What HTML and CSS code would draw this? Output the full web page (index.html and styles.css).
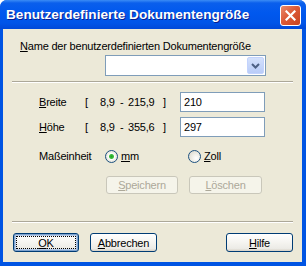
FILE: index.html
```html
<!DOCTYPE html>
<html lang="de">
<head>
  <meta charset="UTF-8" />
  <title>Benutzerdefinierte Dokumentengröße</title>
  <link rel="stylesheet" href="styles.css">
</head>
<body>
  <div class="window">
    <div class="titlebar">
      <span class="title">Benutzerdefinierte Dokumentengröße</span>
      <div class="close-btn">
        <svg width="11" height="11" viewBox="0 0 11 11">
          <path d="M1.5 1.5 L9.5 9.5 M9.5 1.5 L1.5 9.5" stroke="#fff" stroke-width="2.2" stroke-linecap="square" fill="none"/>
        </svg>
      </div>
    </div>

    <div class="client">
      <div class="name-label"><u>N</u>ame der benutzerdefinierten Dokumentengröße</div>
      <div class="combo">
        <div class="combo-arrow">
          <svg width="9" height="6" viewBox="0 0 9 6">
            <path d="M1 1 L4.5 4.5 L8 1" stroke="#4d6185" stroke-width="2" fill="none"/>
          </svg>
        </div>
      </div>

      <div class="sep"></div>

      <div class="size-rows">
        <div class="row">
          <span class="lbl"><u>B</u>reite</span>
          <span class="br">[</span><span class="lo">8,9</span><span class="dash">-</span><span class="hi">215,9</span><span class="br-end">]</span>
          <div class="field">210</div>
        </div>
        <div class="row">
          <span class="lbl"><u>H</u>öhe</span>
          <span class="br">[</span><span class="lo">8,9</span><span class="dash">-</span><span class="hi">355,6</span><span class="br-end">]</span>
          <div class="field">297</div>
        </div>
        <div class="row unit-row">
          <span class="lbl unit-lbl">Maßeinheit</span>
          <span class="radio first"><span class="dot checked"></span><span><u>m</u>m</span></span>
          <span class="radio"><span class="dot"></span><span><u>Z</u>oll</span></span>
        </div>
      </div>

      <div class="mid-buttons">
        <div class="btn disabled save"><u>S</u>peichern</div>
        <div class="btn disabled del"><u>L</u>öschen</div>
      </div>

      <div class="sep sep-bottom"></div>

      <div class="footer">
        <div class="btn default ok"><u>O</u>K</div>
        <div class="btn cancel"><u>A</u>bbrechen</div>
        <div class="btn help"><u>H</u>ilfe</div>
      </div>
    </div>
  </div>
</body>
</html>
```

FILE: styles.css
```css
* {
  margin: 0;
  padding: 0;
  box-sizing: border-box;
}

body {
  background-color: #fff;
  font-family: 'Liberation Sans', Arial, sans-serif;
  font-size: 11px;
  line-height: 13px;
  letter-spacing: -0.2px;
  color: #000;
}

u {
  text-decoration: underline;
  text-underline-offset: 1px;
}

.window {
  width: 306px;
  height: 266px;
  display: flex;
  flex-direction: column;
  background-color: #0054e3;
  border-radius: 7px 7px 0 0;
  overflow: hidden;
}

/* Titelleiste */
.titlebar {
  height: 29px;
  flex-shrink: 0;
  display: flex;
  align-items: flex-start;
  justify-content: space-between;
  padding: 5px 5px 0 6px;
  background: linear-gradient(to bottom, #3b8cf5 0, #0a5fec 3px, #0058ee 45%, #0054e8 80%, #0048d8 100%);
}

.title {
  color: #fff;
  font-weight: bold;
  font-size: 13.6px;
  line-height: 16px;
  padding-top: 2px;
  letter-spacing: 0;
  text-shadow: 1px 1px 0 #0a1f8f;
}

.close-btn {
  width: 21px;
  height: 21px;
  border: 1px solid #fff;
  border-radius: 3px;
  background: linear-gradient(135deg, #e98a6c 0%, #dc5a37 45%, #c9431f 100%);
  display: flex;
  align-items: center;
  justify-content: center;
}

/* Inhalt */
.client {
  flex: 1;
  background-color: #ece9d8;
  margin: 0 4px 4px 3px;
  display: flex;
  flex-direction: column;
}

.name-label {
  margin-top: 11px;
  padding-left: 17px;
}

.combo {
  margin: 2px 0 0 102px;
  width: 161px;
  height: 21px;
  border: 1px solid #7f9db9;
  background-color: #fff;
  display: flex;
  justify-content: flex-end;
  padding: 1px;
}

.combo-arrow {
  width: 17px;
  height: 17px;
  border-radius: 2px;
  background: linear-gradient(to bottom, #d4e1fc, #b9ccf8);
  border: 1px solid #c3d3fd;
  display: flex;
  align-items: center;
  justify-content: center;
}

.sep {
  margin: 5px 0 0 9px;
  width: 281px;
  height: 2px;
  border-top: 1px solid #aca899;
  border-bottom: 1px solid #fff;
}

.size-rows {
  margin-top: 9px;
  display: flex;
  flex-direction: column;
  gap: 5px;
}

.row {
  height: 20px;
  display: flex;
  align-items: center;
  padding-left: 36px;
}

.lbl {
  width: 46px;
}

.br {
  width: 15px;
}

.lo {
  width: 20px;
}

.dash {
  width: 8px;
}

.hi {
  width: 35px;
}

.br-end {
  width: 17px;
}

.field {
  width: 85px;
  height: 20px;
  border: 1px solid #7f9db9;
  background-color: #fff;
  padding: 3px 0 0 3px;
}

.unit-row {
  margin-top: 4px;
}

.unit-lbl {
  width: 66px;
}

.radio {
  display: flex;
  align-items: center;
  gap: 3px;
}

.radio.first {
  width: 83px;
}

.dot {
  width: 13px;
  height: 13px;
  border-radius: 50%;
  border: 1px solid #1c5180;
  background: radial-gradient(circle at 65% 65%, #fff 0, #f0efe8 40%, #d6d3c6 100%);
}

.dot.checked {
  background: radial-gradient(circle, #21a121 0, #3fbf3f 2px, #fff 3px, #f0efe8 55%, #d6d3c6 100%);
}

/* Buttons */
.btn {
  display: flex;
  align-items: center;
  justify-content: center;
  border: 1px solid #003c74;
  border-radius: 3px;
  background: linear-gradient(to bottom, #ffffff 0%, #f5f4f0 50%, #ecebe6 85%, #d6d0c5 100%);
  padding-top: 1px;
}

.btn.disabled {
  border-color: #c9c7ba;
  background: #f5f4ea;
  color: #aca899;
}

.mid-buttons {
  margin: 10px 0 0 103px;
  display: flex;
  gap: 11px;
}

.save {
  width: 72px;
  height: 18px;
}

.del {
  width: 73px;
  height: 18px;
}

.sep-bottom {
  margin-top: 27px;
}

.footer {
  margin-top: 10px;
  display: flex;
  padding: 0 9px 0 10px;
  gap: 11px;
}

.footer .btn {
  height: 19px;
}

.ok {
  width: 66px;
}

.cancel {
  width: 67px;
}

.help {
  width: 67px;
  margin-left: auto;
}

.btn.default {
  box-shadow: inset 0 0 0 1px #7da2ce, inset 0 0 0 2px #b6cbe8;
  outline: 1px dotted #000;
  outline-offset: -4px;
}
```
